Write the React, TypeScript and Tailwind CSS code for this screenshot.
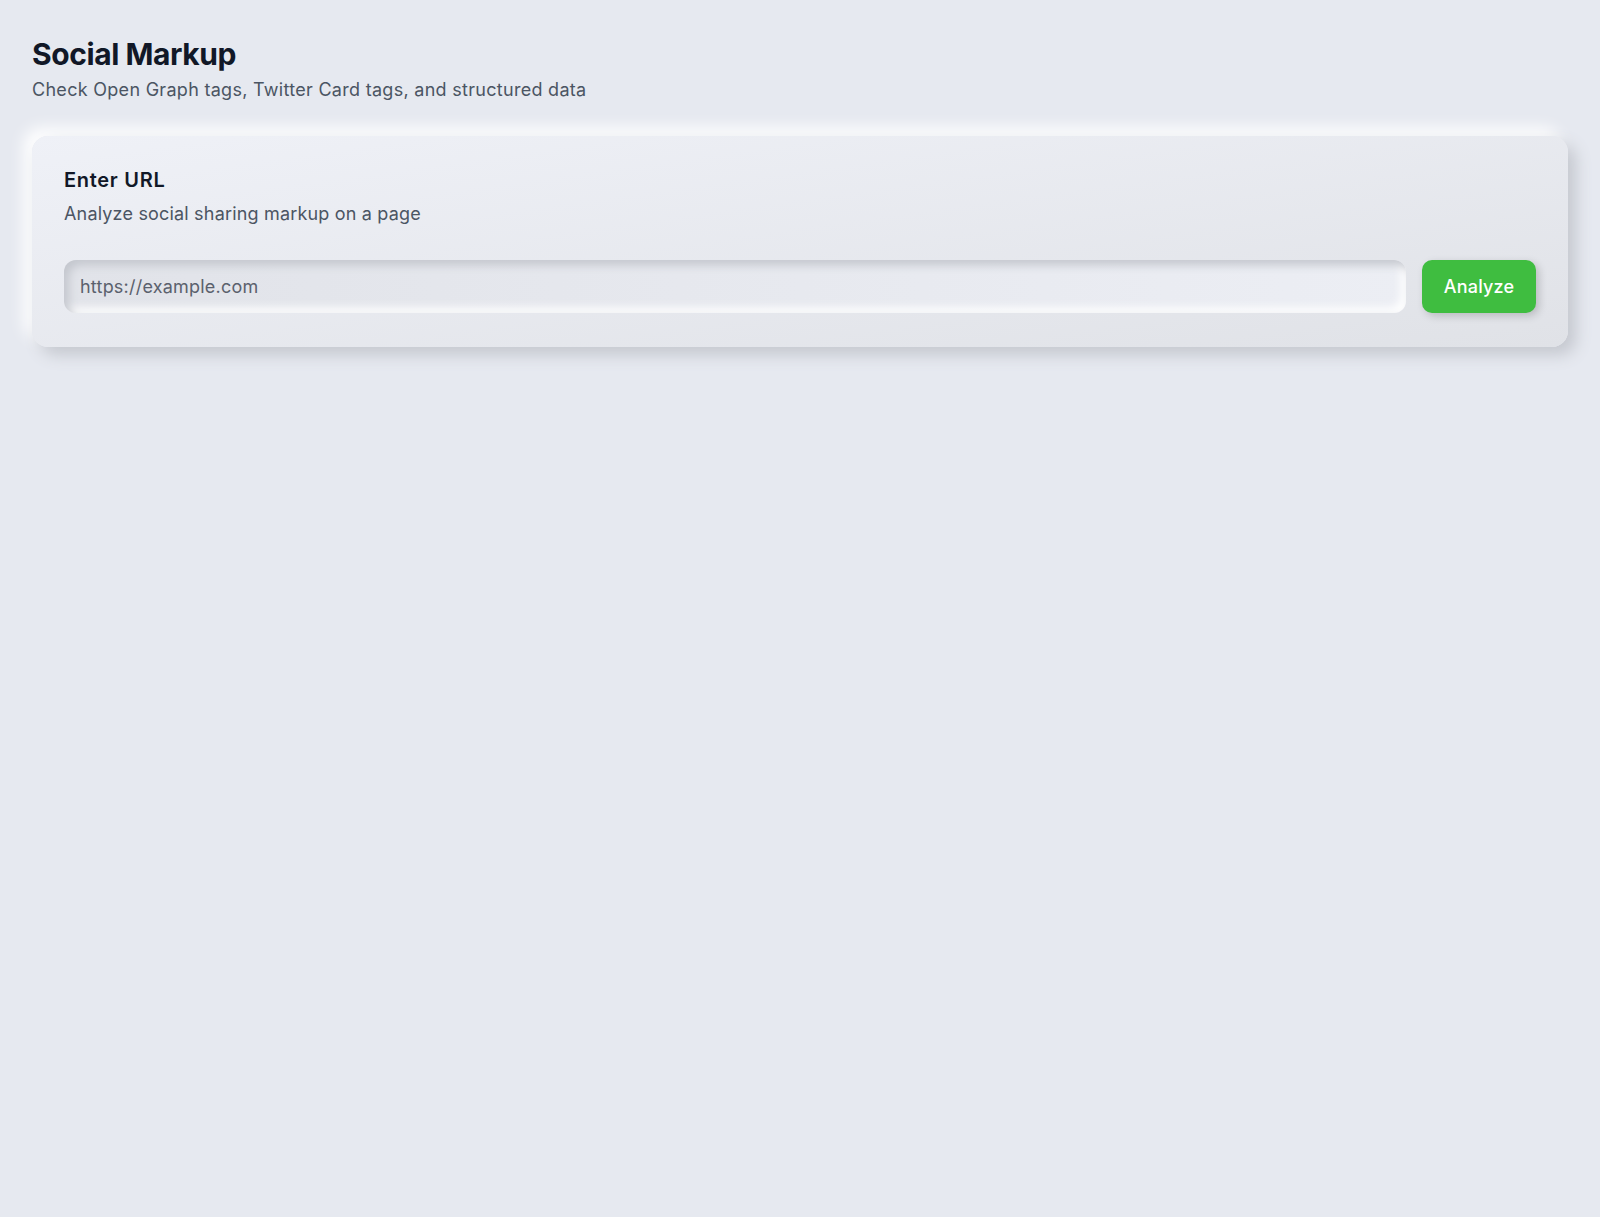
import { useState } from "react";

// Página de "Social Markup": cabecera + tarjeta neumórfica con el campo de URL.
export default function App() {
  const [url, setUrl] = useState("");

  return (
    <div className="min-h-screen bg-[#e6e9f0] font-['Inter',sans-serif] px-8 pt-9 pb-8">
      <header>
        <h1 className="text-3xl leading-9 font-bold tracking-[-0.014em] text-[#111827]">Social Markup</h1>
        <p className="mt-1 text-lg leading-7 tracking-[0.016em] text-[#4b5563]">
          Check Open Graph tags, Twitter Card tags, and structured data
        </p>
      </header>

      {/* Tarjeta con sombra doble (clara arriba-izquierda, oscura abajo-derecha) */}
      <section className="mt-8 rounded-2xl bg-linear-to-br from-[#eff1f7] to-[#e0e2e7] px-8 pt-[30px] pb-[34px] shadow-[8px_8px_16px_#c5c8cf,-8px_-8px_16px_#ffffff]">
        <h2 className="text-xl leading-7 font-semibold tracking-[0.035em] text-[#111827]">Enter URL</h2>
        <p className="mt-1.5 text-lg leading-7 tracking-[0.01em] text-[#4b5563]">
          Analyze social sharing markup on a page
        </p>

        <form className="mt-8 flex gap-4" onSubmit={(e) => e.preventDefault()}>
          <input
            type="text"
            value={url}
            onChange={(e) => setUrl(e.target.value)}
            placeholder="https://example.com"
            className="flex-1 min-w-0 h-[53px] rounded-xl bg-linear-to-r from-[#e1e3e9] to-[#eceef4] px-4 text-lg tracking-[0.012em] text-[#374151] placeholder:text-[#5b616d] outline-none shadow-[inset_5px_5px_10px_#c4c7ce,inset_-5px_-5px_10px_#ffffff]"
          />
          <button
            type="submit"
            className="h-[53px] w-[114px] shrink-0 rounded-[10px] bg-[#3fbd40] text-lg font-medium tracking-[0.01em] text-white shadow-[3px_3px_8px_rgba(0,0,0,0.18)]"
          >
            Analyze
          </button>
        </form>
      </section>
    </div>
  );
}
